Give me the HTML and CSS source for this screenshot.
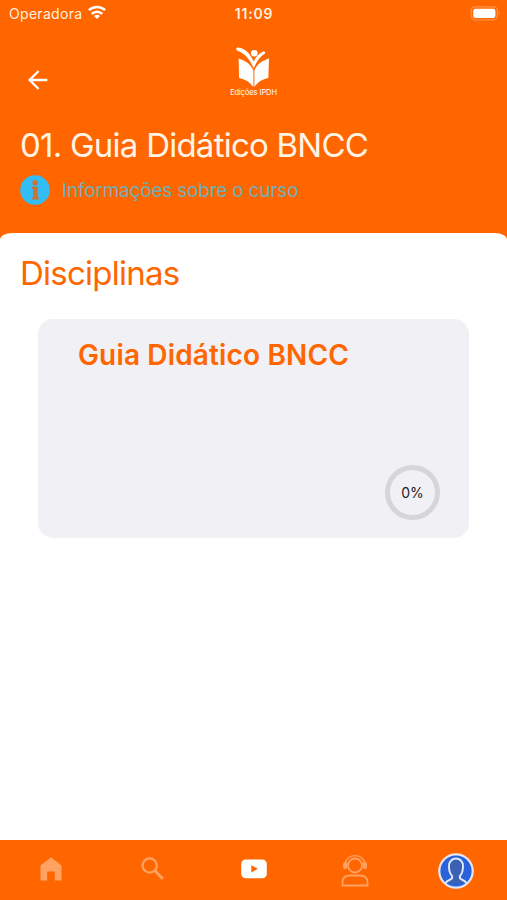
FILE: index.html
```html
<!DOCTYPE html>
<html lang="pt-BR">
<head>
  <meta charset="UTF-8" />
  <title>Guia Didático BNCC</title>
  <link rel="stylesheet" href="styles.css">
</head>
<body>
  <header class="header">
    <div class="status-bar">
      <div class="carrier">
        <span>Operadora</span>
        <svg width="18" height="14" viewBox="0 0 18 14" fill="none" stroke="#fff" stroke-width="2.5">
          <path d="M0.9 5.2a11.6 11.6 0 0 1 16.2 0" />
          <path d="M3.7 8.8a7.6 7.6 0 0 1 10.6 0" />
          <path d="M9 13.9L6 10.9a4.2 4.2 0 0 1 6 0z" fill="#fff" stroke="none" />
        </svg>
      </div>
      <span class="clock">11:09</span>
      <svg class="battery" width="31" height="15" viewBox="0 0 31 15">
        <rect x="1.2" y="0.8" width="26.2" height="13" rx="4" fill="none" stroke="#ff9148" stroke-width="1.3" />
        <rect x="3.2" y="2.8" width="22.2" height="9.2" rx="2.2" fill="#fff" />
        <path d="M28.8 4.8q2.2 2.4 0 4.8z" fill="#ff9148" />
      </svg>
    </div>

    <div class="top-row">
      <button class="back" aria-label="Voltar">
        <svg width="20" height="20" viewBox="0 0 20 20" fill="none" stroke="#fff" stroke-width="2.3">
          <path d="M19.3 10H1.8M10.6 1L1.6 10l9 9" />
        </svg>
      </button>
      <div class="logo">
        <svg width="34" height="41" viewBox="0 0 34 41" fill="#fff">
          <circle cx="18.3" cy="6.2" r="3.3" />
          <path d="M1.2 0.4C8 0.6 14 5.5 17.7 14.5C20 10 23 6.6 27 4.6Q29.5 4 29.2 6.2C24 9.5 20.5 14.5 17.8 21.5C14 12.5 8.5 6 1.4 3.8Q-0.9 1.9 1.2 0.4z" />
          <path d="M2.6 11.4C10 13.5 15 17.5 17.4 23.5V40C14 35 9 32 3.1 31z" />
          <path d="M33 11.4C25.6 13.5 20.6 17.5 18.4 23.5V40C21.6 35 26.6 32 32.3 31z" />
        </svg>
        <span>Edições IPDH</span>
      </div>
    </div>

    <h1>01. Guia Didático BNCC</h1>
    <div class="info">
      <svg width="30" height="30" viewBox="0 0 30 30">
        <circle cx="15" cy="15" r="14.8" fill="#32bdf4" />
        <circle cx="15.1" cy="7.7" r="2.7" fill="#cf7132" />
        <path d="M11.8 11.7h5.9v10.6h1v2.1h-6.4v-2.1h0.8v-8.5h-1.3z" fill="#cf7132" />
      </svg>
      <span>Informações sobre o curso</span>
    </div>
  </header>

  <main class="content">
    <h2>Disciplinas</h2>
    <div class="card">
      <h3>Guia Didático BNCC</h3>
      <div class="progress">0%</div>
    </div>
  </main>

  <nav class="tab-bar">
    <div class="tab">
      <svg width="22" height="24" viewBox="0 0 22 24" fill="#ffa262">
        <path d="M0.5 8.5L11 0.3l10.5 8.2v14.9h-6.7v-8.9h-7.6v8.9h-6.7z" />
      </svg>
    </div>
    <div class="tab">
      <svg width="23" height="23" viewBox="0 0 23 23" fill="none" stroke="#ffa262">
        <circle cx="8.7" cy="8.5" r="7.1" stroke-width="2.3" />
        <path d="M13.6 13.5l8.2 8.2" stroke-width="3" />
      </svg>
    </div>
    <div class="tab tab-video">
      <svg width="26" height="20" viewBox="0 0 26 20">
        <rect x="0.2" y="0.5" width="25.6" height="18.8" rx="4.5" fill="#fff" />
        <path d="M10.3 6.2v7.2l6.6-3.6z" fill="#ff6600" />
      </svg>
    </div>
    <div class="tab tab-support">
      <svg width="28" height="33" viewBox="0 0 28 33" fill="none" stroke="#ffa262" stroke-width="1.8">
        <circle cx="14" cy="11.5" r="7" />
        <path d="M4.2 9a10.2 10.2 0 0 1 19.6 0" stroke-width="1.4" />
        <rect x="3" y="9" width="2.4" height="5" rx="1" fill="#ffa262" />
        <rect x="22.6" y="9" width="2.4" height="5" rx="1" fill="#ffa262" />
        <path d="M1.5 31.5v-3.4q0-6.6 8-6.6h9q8 0 8 6.6v3.4z" />
      </svg>
    </div>
    <div class="tab tab-profile">
      <svg width="36" height="36" viewBox="0 0 36 36">
        <circle cx="18" cy="18" r="16.7" fill="#2962d9" />
        <path d="M7 30.3q2-2.6 5.4-3.8q2.6-1.2 1.6-3.6q-3-3.4-3-9.4c-0.3-10.6 14.3-10.6 14 0q0 6-3 9.4q-1 2.4 1.6 3.6q3.4 1.2 5.4 3.8" fill="#3c62b4" stroke="#dfe9fc" stroke-width="1.9" />
        <circle cx="18" cy="18" r="16.7" fill="none" stroke="#e3e4ef" stroke-width="2.2" />
      </svg>
    </div>
  </nav>
</body>
</html>
```

FILE: styles.css
```css
* {
    box-sizing: border-box;
}

body {
    margin: 0;
    height: 900px;
    display: flex;
    flex-direction: column;
    background-color: #ff6600;
    font-family: Inter, "Liberation Sans", sans-serif;
    overflow: hidden;
}

svg {
    display: block;
    flex-shrink: 0;
}

h1, h2, h3 {
    margin: 0;
}

.header {
    height: 233px;
    color: #fff;
}

.status-bar {
    display: grid;
    grid-template-columns: 1fr auto 1fr;
    align-items: center;
    height: 27px;
    padding: 0 6px 0 9px;
    font-size: 14px;
    color: #fff0df;
}

.carrier {
    display: flex;
    align-items: center;
    gap: 6px;
    letter-spacing: 0.3px;
}

.carrier svg {
    margin-top: -3px;
}

.clock {
    margin-left: -2px;
    font-weight: 600;
    letter-spacing: 0.8px;
}

.battery {
    justify-self: end;
}

.top-row {
    display: grid;
    grid-template-columns: 1fr auto 1fr;
    height: 98px;
    padding: 20px 0 0 28px;
}

.back {
    width: 20px;
    height: 20px;
    margin-top: 23px;
    padding: 0;
    border: none;
    background: none;
}

.logo {
    display: flex;
    flex-direction: column;
    align-items: center;
    margin-right: 28px;
    font-size: 7.5px;
    line-height: 9px;
    letter-spacing: -0.1px;
}

h1 {
    padding-left: 20px;
    font-size: 33px;
    font-weight: 400;
    line-height: 40px;
    letter-spacing: -0.76px;
    color: #fff4e6;
}

.info {
    display: flex;
    align-items: center;
    gap: 12px;
    margin-top: 10px;
    padding-left: 20px;
    font-size: 19px;
    letter-spacing: -0.2px;
    color: #6fb0b4;
}

.content {
    flex: 1;
    padding: 20px 38px 0;
    border-radius: 12px 12px 0 0 / 7px 7px 0 0;
    background-color: #fff;
}

h2 {
    margin-left: -18px;
    font-size: 33px;
    font-weight: 400;
    line-height: 40px;
    letter-spacing: -0.75px;
    color: #ff6600;
}

.card {
    display: flex;
    flex-direction: column;
    justify-content: space-between;
    height: 219px;
    margin-top: 26px;
    padding: 18px 29px 18px 40px;
    border-radius: 15px;
    background-color: #f1f0f5;
}

h3 {
    font-size: 28px;
    font-weight: 600;
    line-height: 36px;
    letter-spacing: 0.15px;
    color: #ff6600;
}

.progress {
    display: flex;
    align-items: center;
    justify-content: center;
    align-self: flex-end;
    width: 55px;
    height: 55px;
    border: 5px solid #d6d5da;
    border-radius: 50%;
    font-size: 14px;
    color: #222;
}

.tab-bar {
    display: grid;
    grid-template-columns: repeat(5, 1fr);
    height: 60px;
    padding-bottom: 3px;
    background-color: #ff6600;
}

.tab {
    display: flex;
    align-items: center;
    justify-content: center;
}

.tab-video {
    padding-left: 1px;
}

.tab-support,
.tab-profile {
    padding-top: 4px;
}
```
